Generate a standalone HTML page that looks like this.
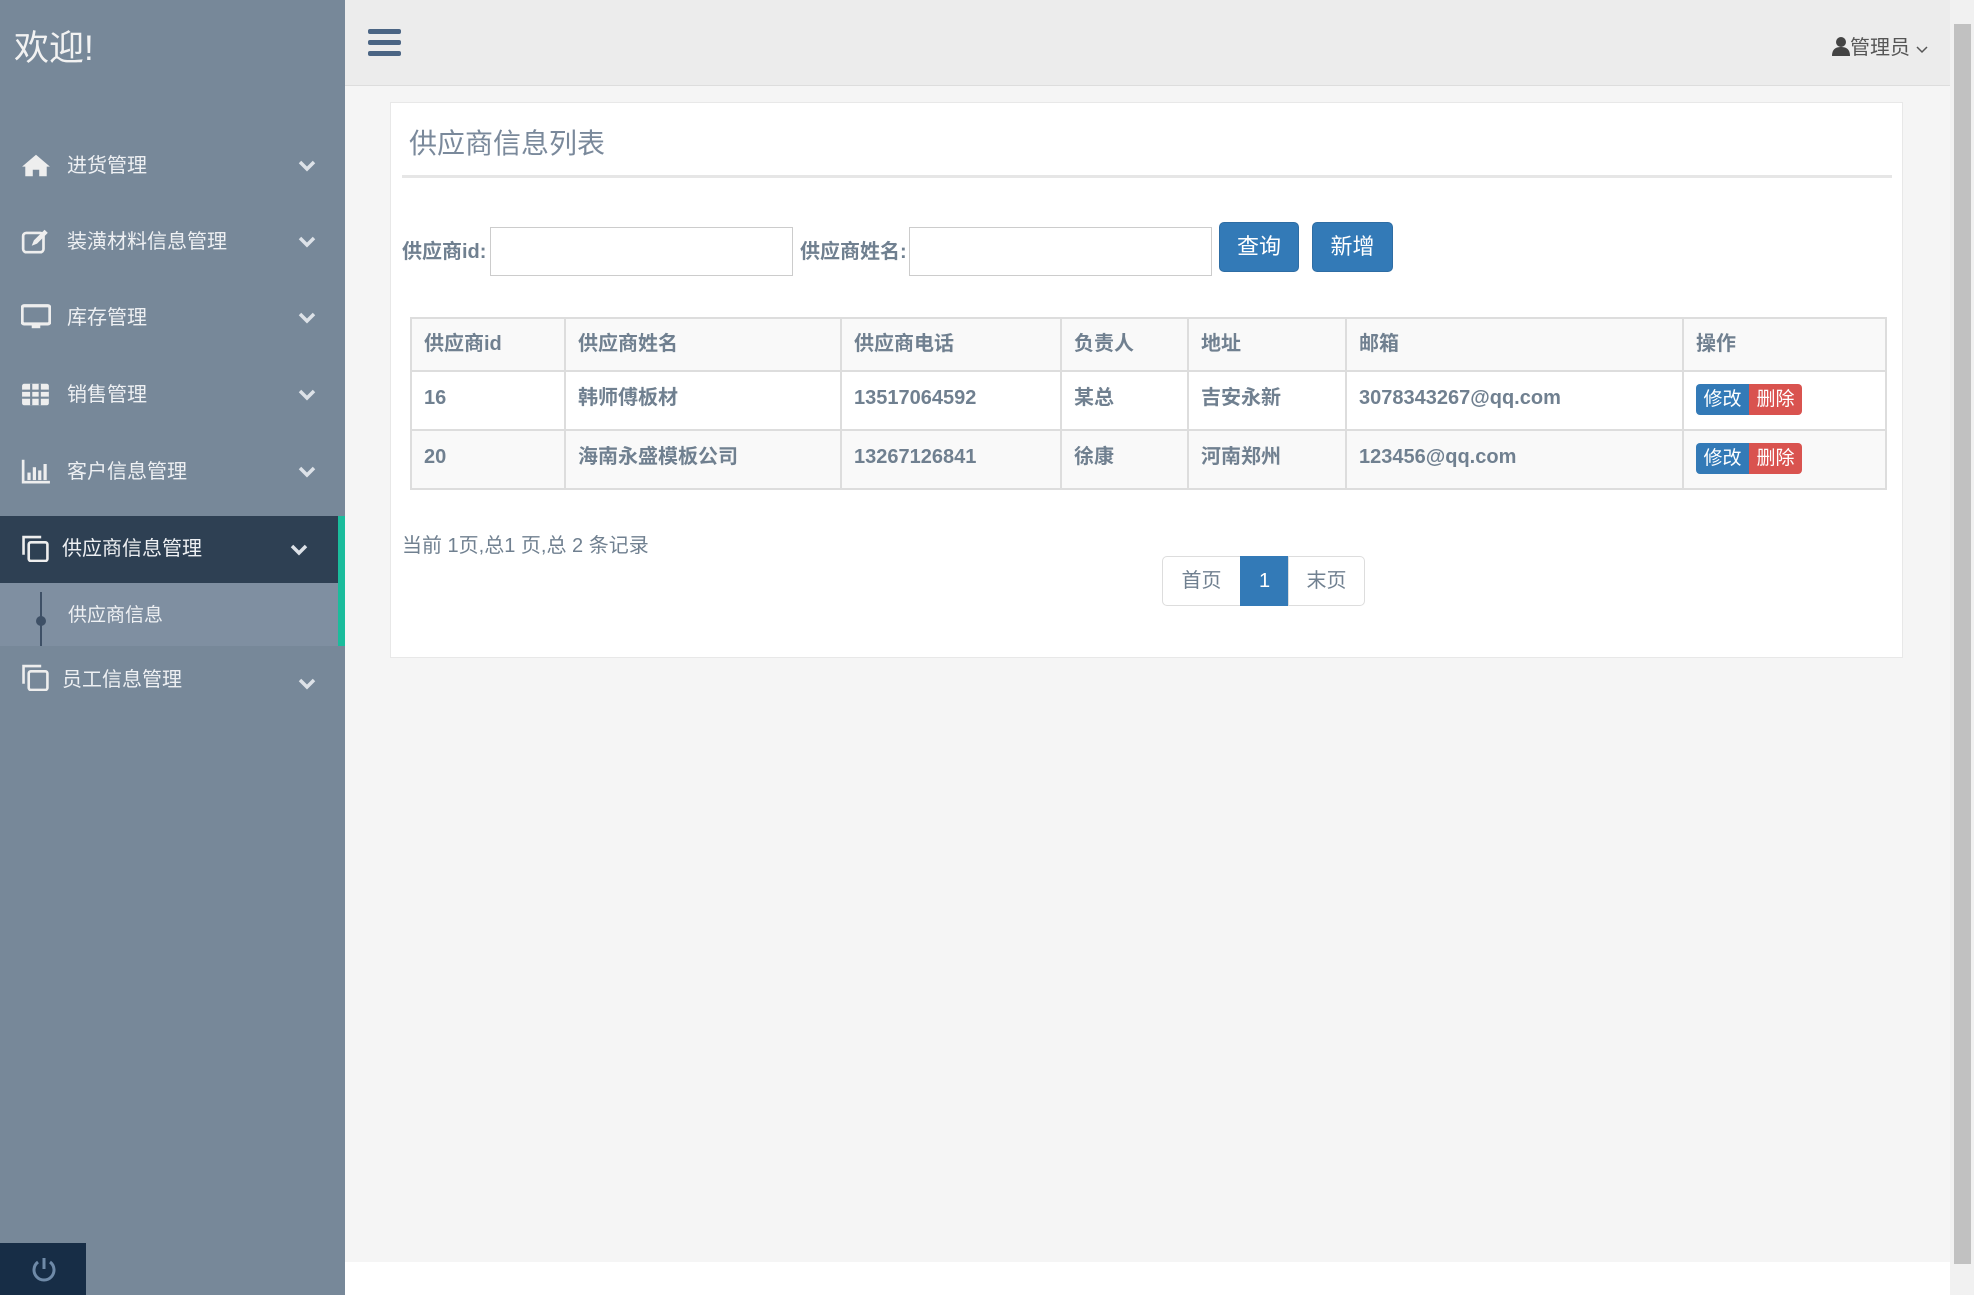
<!DOCTYPE html>
<html><head><meta charset="utf-8"><style>
*{margin:0;padding:0;box-sizing:border-box}
body{width:1974px;height:1295px;overflow:hidden;background:#f5f5f5;font-family:"Liberation Sans","Noto Sans CJK SC",sans-serif;position:relative}
.side{position:absolute;left:0;top:0;width:345px;height:1295px;background:#778899;color:#eef0f3}
.welcome{position:absolute;left:14px;top:20px;font-size:35px;color:#f2f2f2}
.item{position:absolute;left:0;width:345px;height:60px;font-size:20px;line-height:60px}
.item .ic{position:absolute;left:21px;top:16px;width:30px;height:27px}
.item .tx{position:absolute;left:67px;top:0}
.chev{position:absolute;left:298px;top:24px}
.active{background:#2e4053;height:67px;width:338px}
.sub{position:absolute;left:0;top:583px;width:338px;height:63px;background:#7f8fa1;font-size:19px}
.green{position:absolute;left:338px;top:516px;width:7px;height:130px;background:#1abc9c}
.power{position:absolute;left:0;top:1243px;width:86px;height:52px;background:#172d46}
.header{position:absolute;left:345px;top:0;width:1605px;height:86px;background:#ececec;border-bottom:1px solid #ddd}
.scroll{position:absolute;left:1950px;top:0;width:24px;height:1295px;background:#f1f1f1}
.thumb{position:absolute;left:1954px;top:24px;width:17px;height:1240px;background:#c1c1c1}
.bottom{position:absolute;left:345px;top:1262px;width:1605px;height:33px;background:#fff}
.panel{position:absolute;left:390px;top:102px;width:1513px;height:556px;background:#fff;border:1px solid #e8e8e8}
.title{position:absolute;left:409px;top:122px;font-size:28px;color:#7a899b}
.hr{position:absolute;left:402px;top:175px;width:1490px;height:3px;background:#e6e6e6}
.lab{position:absolute;top:235px;font-size:20px;font-weight:bold;color:#708090}
.inp{position:absolute;top:227px;width:303px;height:49px;border:1px solid #ccc;background:#fff}
.btn{position:absolute;top:222px;height:50px;background:#337ab7;border-radius:5px;color:#fff;font-size:22px;text-align:center;line-height:48px;border:1px solid #2e6da4}
table{position:absolute;left:410px;top:317px;border-collapse:collapse;font-size:20px;font-weight:bold;color:#708090}
td,th{border:2px solid #ddd;text-align:left;padding:0 12px;vertical-align:top}
th{height:53px;line-height:50px;background:#f9f9f9}
td{height:59px;line-height:40px;padding-top:6px}
tr.odd td{background:#f9f9f9}
.ops{display:inline-flex;margin-top:6px}
.ops span{display:inline-block;width:53px;height:31px;line-height:31px;text-align:center;color:#fff;font-size:19px;font-weight:normal}
.pg{position:absolute;top:556px;height:50px;border:1px solid #ddd;font-size:20px;line-height:48px;text-align:center;color:#708090;background:#fff}
</style></head><body>
<div class="side">
<div class="welcome">欢迎!</div>
<div class="item" style="top:136px"><svg class="ic" viewBox="0 0 28 24"><path d="M14 2L1 13h3v9h7v-6h6v6h7v-9h3z" fill="#eee"/></svg><span class="tx">进货管理</span><svg class="chev" width="18" height="12" viewBox="0 0 18 12"><path d="M2 2l7 7 7-7" stroke="#dde2e8" stroke-width="3.5" fill="none"/></svg></div>
<div class="item" style="top:212px"><svg class="ic" viewBox="0 0 28 24"><rect x="2" y="4" width="19" height="18" rx="3" stroke="#eee" stroke-width="2.5" fill="none"/><path d="M10 16l2-5 10-10 3 3-10 10z" fill="#eee"/></svg><span class="tx">装潢材料信息管理</span><svg class="chev" width="18" height="12" viewBox="0 0 18 12"><path d="M2 2l7 7 7-7" stroke="#dde2e8" stroke-width="3.5" fill="none"/></svg></div>
<div class="item" style="top:288px"><svg class="ic" viewBox="0 0 28 24"><rect x="1" y="1" width="26" height="17" rx="2" stroke="#eee" stroke-width="3" fill="none"/><rect x="10" y="18" width="8" height="4" fill="#eee"/></svg><span class="tx">库存管理</span><svg class="chev" width="18" height="12" viewBox="0 0 18 12"><path d="M2 2l7 7 7-7" stroke="#dde2e8" stroke-width="3.5" fill="none"/></svg></div>
<div class="item" style="top:365px"><svg class="ic" viewBox="0 0 28 24"><rect x="1" y="2" width="25" height="20" rx="2" fill="#eee"/><path d="M1 8.5h25M1 15h25M9.5 2v20M17.5 2v20" stroke="#778899" stroke-width="2"/></svg><span class="tx">销售管理</span><svg class="chev" width="18" height="12" viewBox="0 0 18 12"><path d="M2 2l7 7 7-7" stroke="#dde2e8" stroke-width="3.5" fill="none"/></svg></div>
<div class="item" style="top:442px"><svg class="ic" viewBox="0 0 28 24"><path d="M2 1v21h25" stroke="#eee" stroke-width="2.5" fill="none"/><rect x="6" y="13" width="3" height="7" fill="#eee"/><rect x="11" y="8" width="3" height="12" fill="#eee"/><rect x="16" y="11" width="3" height="9" fill="#eee"/><rect x="21" y="5" width="3" height="15" fill="#eee"/></svg><span class="tx">客户信息管理</span><svg class="chev" width="18" height="12" viewBox="0 0 18 12"><path d="M2 2l7 7 7-7" stroke="#dde2e8" stroke-width="3.5" fill="none"/></svg></div>
<div class="item active" style="top:516px;line-height:67px"><svg class="ic" style="top:19px" viewBox="0 0 28 26"><path d="M2 19V2h17" stroke="#eee" stroke-width="2.5" fill="none"/><rect x="7" y="7" width="18" height="18" rx="2" stroke="#eee" stroke-width="2.5" fill="none"/></svg><span class="tx" style="left:62px">供应商信息管理</span><svg class="chev" style="left:290px;top:28px" width="18" height="12" viewBox="0 0 18 12"><path d="M2 2l7 7 7-7" stroke="#dde2e8" stroke-width="3.5" fill="none"/></svg></div>
<div class="sub"><div style="position:absolute;left:40px;top:9px;width:2px;height:54px;background:#3e5066"></div><div style="position:absolute;left:36px;top:33px;width:10px;height:10px;border-radius:5px;background:#3e5066"></div><span style="position:absolute;left:68px;top:17px">供应商信息</span></div>
<div class="green"></div>
<div class="item" style="top:650px"><svg class="ic" style="top:14px" viewBox="0 0 28 26"><path d="M2 19V2h17" stroke="#eee" stroke-width="2.5" fill="none"/><rect x="7" y="7" width="18" height="18" rx="2" stroke="#eee" stroke-width="2.5" fill="none"/></svg><span class="tx" style="left:62px">员工信息管理</span><svg class="chev" style="top:28px" width="18" height="12" viewBox="0 0 18 12"><path d="M2 2l7 7 7-7" stroke="#dde2e8" stroke-width="3.5" fill="none"/></svg></div>
<div class="power"><svg style="position:absolute;left:30px;top:13px" width="28" height="28" viewBox="0 0 28 28"><path d="M8 6a10 10 0 1 0 12 0" stroke="#6f8aa8" stroke-width="3" fill="none"/><path d="M14 2v11" stroke="#6f8aa8" stroke-width="3"/></svg></div>
</div>
<div class="header">
<svg style="position:absolute;left:23px;top:29px" width="33" height="28" viewBox="0 0 33 28"><rect x="0" y="0" width="33" height="5" rx="2" fill="#4b6584"/><rect x="0" y="11" width="33" height="5" rx="2" fill="#4b6584"/><rect x="0" y="22" width="33" height="5" rx="2" fill="#4b6584"/></svg>
<div style="position:absolute;left:1487px;top:31px;font-size:20px;color:#555"><svg width="18" height="20" viewBox="0 0 18 20" style="vertical-align:-2px"><circle cx="9" cy="6" r="5" fill="#444"/><path d="M0 20c0-7 4-9 9-9s9 2 9 9z" fill="#444"/></svg>管理员 <svg width="12" height="8" viewBox="0 0 12 8"><path d="M1 1l5 5 5-5" stroke="#555" stroke-width="1.5" fill="none"/></svg></div>
</div>
<div class="bottom"></div>
<div class="scroll"></div><div class="thumb"></div>
<div class="panel"></div>
<div class="title">供应商信息列表</div>
<div class="hr"></div>
<div class="lab" style="left:402px">供应商id:</div>
<div class="inp" style="left:490px"></div>
<div class="lab" style="left:800px">供应商姓名:</div>
<div class="inp" style="left:909px"></div>
<div class="btn" style="left:1219px;width:80px">查询</div>
<div class="btn" style="left:1312px;width:81px">新增</div>
<table>
<tr><th style="width:154px">供应商id</th><th style="width:276px">供应商姓名</th><th style="width:220px">供应商电话</th><th style="width:127px">负责人</th><th style="width:158px">地址</th><th style="width:337px">邮箱</th><th style="width:203px">操作</th></tr>
<tr><td>16</td><td>韩师傅板材</td><td>13517064592</td><td>某总</td><td>吉安永新</td><td>3078343267@qq.com</td><td><div class="ops"><span style="background:#337ab7;border-radius:4px 0 0 4px">修改</span><span style="background:#d9534f;border-radius:0 4px 4px 0">删除</span></div></td></tr>
<tr class="odd"><td>20</td><td>海南永盛模板公司</td><td>13267126841</td><td>徐康</td><td>河南郑州</td><td>123456@qq.com</td><td><div class="ops"><span style="background:#337ab7;border-radius:4px 0 0 4px">修改</span><span style="background:#d9534f;border-radius:0 4px 4px 0">删除</span></div></td></tr>
</table>
<div style="position:absolute;left:402px;top:529px;font-size:20px;color:#708090">当前 1页,总1 页,总 2 条记录</div>
<div class="pg" style="left:1162px;width:79px;border-radius:5px 0 0 5px">首页</div>
<div class="pg" style="left:1240px;width:49px;background:#337ab7;color:#fff;border-color:#337ab7">1</div>
<div class="pg" style="left:1288px;width:77px;border-radius:0 5px 5px 0">末页</div>
</body></html>
